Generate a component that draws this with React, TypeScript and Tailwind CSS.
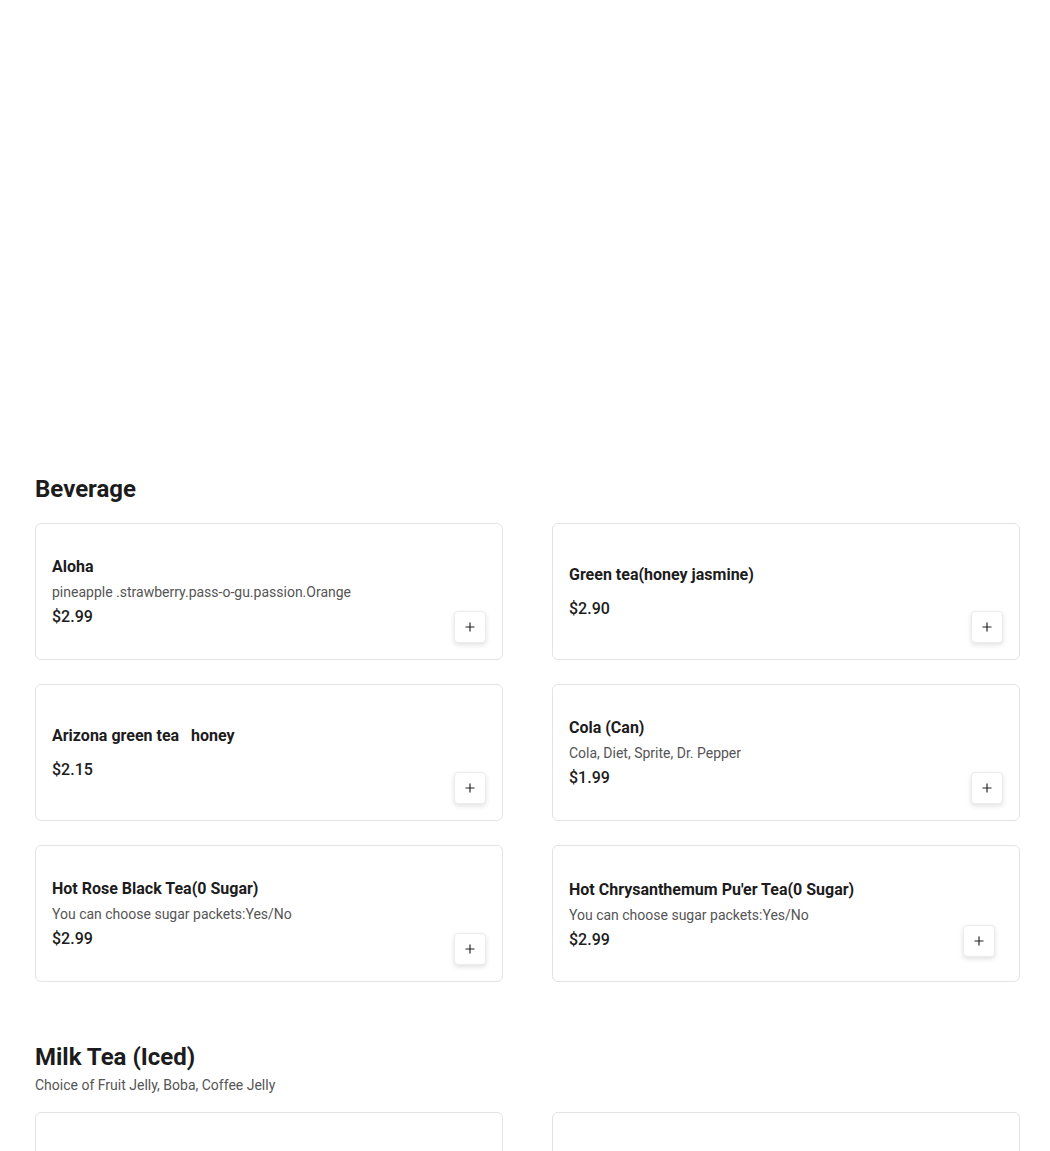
import { Plus } from "lucide-react";

type Item = {
  name: string;
  desc?: string;
  price: string;
  odd?: boolean;
};

const beverages: Item[] = [
  { name: "Aloha", desc: "pineapple .strawberry.pass-o-gu.passion.Orange", price: "$2.99" },
  { name: "Green tea(honey jasmine)", price: "$2.90" },
  { name: "Arizona green tea   honey", price: "$2.15" },
  { name: "Cola (Can)", desc: "Cola, Diet, Sprite, Dr. Pepper", price: "$1.99" },
  { name: "Hot Rose Black Tea(0 Sugar)", desc: "You can choose sugar packets:Yes/No", price: "$2.99" },
  {
    name: "Hot Chrysanthemum Pu'er Tea(0 Sugar)",
    desc: "You can choose sugar packets:Yes/No",
    price: "$2.99",
    odd: true,
  },
];

function Card({ item }: { item: Item }) {
  return (
    <div className="flex h-[137px] rounded-md border border-[#e3e3e3] bg-white p-4">
      <div className={"flex flex-1 flex-col self-center " + (item.odd ? "pt-0.5" : "pt-px")}>
        <h3 className="whitespace-pre text-base leading-6 font-bold text-[#1c1c1c]">{item.name}</h3>
        {item.desc && <p className="mt-[3px] text-sm leading-5 text-[#555]">{item.desc}</p>}
        <p className={"text-base leading-6 font-medium text-[#1c1c1c] " + (item.desc ? "mt-[3px]" : "mt-[10px]")}>
          {item.price}
        </p>
      </div>
      <button
        className={
          "flex h-8 w-8 items-center justify-center self-end rounded border border-[#ececec] bg-white text-[#222] shadow-[0_2px_5px_rgba(0,0,0,0.12)] " +
          (item.odd ? "mr-2 mb-2" : "")
        }
      >
        <Plus size={14} strokeWidth={2} />
      </button>
    </div>
  );
}

export default function App() {
  return (
    <div className="min-h-screen bg-white pt-[473px] pb-10 font-['Roboto',sans-serif]">
      <div className="ml-[35px] w-[985px]">
        <section>
          <h2 className="text-2xl leading-8 font-bold text-[#1c1c1c]">Beverage</h2>
          <div className="mt-[18px] grid grid-cols-2 gap-x-[49px] gap-y-6">
            {beverages.map((item, i) => (
              <Card key={i} item={item} />
            ))}
          </div>
        </section>
        <section className="mt-[59px]">
          <h2 className="text-2xl leading-8 font-bold text-[#1c1c1c]">Milk Tea (Iced)</h2>
          <p className="mt-0.5 text-sm leading-5 text-[#555]">Choice of Fruit Jelly, Boba, Coffee Jelly</p>
          <div className="mt-[17px] grid grid-cols-2 gap-x-[49px] gap-y-6">
            <div className="h-[137px] rounded-md border border-[#e3e3e3] bg-white"></div>
            <div className="h-[137px] rounded-md border border-[#e3e3e3] bg-white"></div>
          </div>
        </section>
      </div>
    </div>
  );
}
